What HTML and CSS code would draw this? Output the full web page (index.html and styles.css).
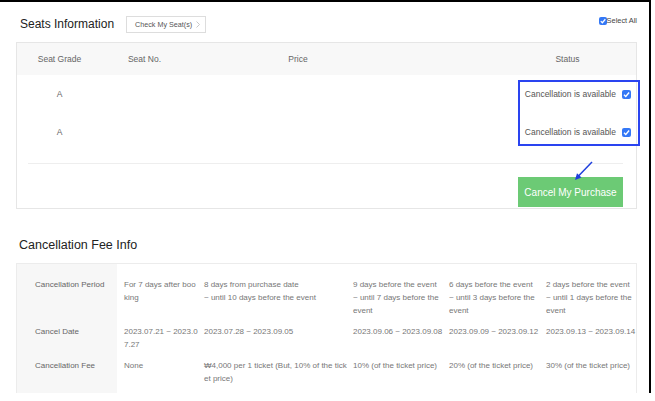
FILE: index.html
```html
<!DOCTYPE html>
<html lang="en">
<head>
<meta charset="utf-8">
<title>Seats Information</title>
<link rel="stylesheet" href="styles.css">
</head>
<body>
<div class="frame">
  <section class="seats">
    <div class="seats-head">
      <h2 class="title">Seats Information</h2>
      <button class="check-btn" type="button">Check My Seat(s)
        <svg class="chev" width="4" height="7" viewBox="0 0 4 7"><path d="M0.5 0.5 L3.5 3.5 L0.5 6.5" fill="none" stroke="#bbb" stroke-width="0.8"/></svg>
      </button>
      <label class="select-all"><span class="cb cb-sm"><svg viewBox="0 0 10 10"><path d="M2.2 5.2 L4.2 7.2 L7.9 2.8" fill="none" stroke="#fff" stroke-width="1.5"/></svg></span>Select All</label>
    </div>
    <div class="seat-box">
      <div class="seat-row seat-header">
        <div class="c c-grade">Seat Grade</div>
        <div class="c c-no">Seat No.</div>
        <div class="c c-price">Price</div>
        <div class="c c-gap"></div>
        <div class="c c-status">Status</div>
      </div>
      <div class="seat-row">
        <div class="c c-grade">A</div>
        <div class="c c-no"></div>
        <div class="c c-price"></div>
        <div class="c c-gap"></div>
        <div class="c c-status c-status-val">Cancellation is available<span class="cb"><svg viewBox="0 0 10 10"><path d="M2.2 5.2 L4.2 7.2 L7.9 2.8" fill="none" stroke="#fff" stroke-width="1.5"/></svg></span></div>
      </div>
      <div class="seat-row">
        <div class="c c-grade">A</div>
        <div class="c c-no"></div>
        <div class="c c-price"></div>
        <div class="c c-gap"></div>
        <div class="c c-status c-status-val">Cancellation is available<span class="cb"><svg viewBox="0 0 10 10"><path d="M2.2 5.2 L4.2 7.2 L7.9 2.8" fill="none" stroke="#fff" stroke-width="1.5"/></svg></span></div>
      </div>
      <div class="seat-foot">
        <button class="cancel-btn" type="button">Cancel My Purchase</button>
      </div>
      <div class="highlight"></div>
      <svg class="arrow" width="35" height="30" viewBox="0 0 35 30">
        <line x1="27" y1="7" x2="13.5" y2="21" stroke="#1f3fdd" stroke-width="1.5"/>
        <polygon points="10,25 16.5,22.6 12,18.3" fill="#1f3fdd"/>
      </svg>
    </div>
  </section>

  <section class="fee">
    <h2 class="title title-fee">Cancellation Fee Info</h2>
    <table class="fee-table">
      <colgroup>
        <col class="w-label">
        <col class="w-1">
        <col class="w-2">
        <col class="w-3">
        <col class="w-4">
        <col class="w-5">
      </colgroup>
      <tr class="r-first">
        <th>Cancellation Period</th>
        <td class="v1">For 7 days after booking</td>
        <td class="v2">8 days from purchase date<br>~ until 10 days before the event</td>
        <td>9 days before the event<br>~ until 7 days before the event</td>
        <td>6 days before the event<br>~ until 3 days before the event</td>
        <td class="v5">2 days before the event<br>~ until 1 days before the event</td>
      </tr>
      <tr>
        <th>Cancel Date</th>
        <td class="v1">2023.07.21 ~ 2023.07.27</td>
        <td class="v2">2023.07.28 ~ 2023.09.05</td>
        <td>2023.09.06 ~ 2023.09.08</td>
        <td>2023.09.09 ~ 2023.09.12</td>
        <td class="v5">2023.09.13 ~ 2023.09.14</td>
      </tr>
      <tr class="r-last">
        <th>Cancellation Fee</th>
        <td class="v1">None</td>
        <td class="v2">₩4,000 per 1 ticket (But, 10% of the ticket price)</td>
        <td>10% (of the ticket price)</td>
        <td>20% (of the ticket price)</td>
        <td class="v5">30% (of the ticket price)</td>
      </tr>
    </table>
  </section>
</div>
</body>
</html>
```
FILE: styles.css
```css
* { box-sizing: border-box; }
html, body { margin: 0; padding: 0; background: #fff; }
body {
  font-family: "Liberation Sans", Arial, "Noto Sans", sans-serif;
  color: #666;
}
.frame {
  width: 651px;
  height: 393px;
  border-top: 2px solid #000;
  border-right: 2px solid #000;
  padding-left: 16px;
}

/* ---------- Seats ---------- */
.seats-head {
  width: 621px;
  display: flex;
  align-items: center;
  padding-top: 14px;
  height: 31px;
}
.title {
  margin: 0 0 0 4px;
  font-size: 12px;
  line-height: 17px;
  font-weight: normal;
  color: #222;
}
.check-btn {
  margin-left: 12px;
  width: 80px;
  height: 17px;
  border: 1px solid #ddd;
  background: #fff;
  padding: 0 0 0 8px;
  display: flex;
  align-items: center;
  gap: 4px;
  font-family: inherit;
  font-size: 7.2px;
  color: #555;
  cursor: pointer;
}
.chev { display: block; }
.select-all {
  margin-left: auto;
  align-self: flex-start;
  margin-top: 1px;
  display: flex;
  align-items: center;
  font-size: 7.4px;
  line-height: 8px;
  color: #444;
}
.cb {
  display: inline-block;
  width: 9px;
  height: 9px;
  border-radius: 2px;
  background: #3478f6;
  flex: none;
}
.cb svg { display: block; width: 100%; height: 100%; }
.cb-sm { width: 8px; height: 8px; margin-right: 0; }

.seat-box {
  position: relative;
  margin-top: 9px;
  width: 621px;
  border: 1px solid #e6e6e6;
}
.seat-row {
  display: grid;
  grid-template-columns: 85px 85px 222px 90px 137px;
  height: 38px;
  align-items: center;
  font-size: 8.5px;
  color: #666;
}
.seat-header {
  height: 32px;
  background: #f8f8f8;
  color: #666;
}
.c { text-align: center; white-space: nowrap; }
.c-status-val {
  display: flex;
  align-items: center;
  justify-content: flex-end;
  gap: 6px;
  padding-right: 5px;
  color: #555;
}
.seat-foot {
  margin: 12px 13px 0 11px;
  border-top: 1px solid #eee;
  padding: 13px 0 1px;
  display: flex;
  justify-content: flex-end;
}
.cancel-btn {
  width: 105px;
  height: 30px;
  border: 0;
  background: #6cca75;
  color: #fff;
  font-family: inherit;
  font-size: 10px;
  padding: 0;
  cursor: pointer;
}
.highlight {
  position: absolute;
  left: 501px;
  top: 37px;
  width: 122px;
  height: 66px;
  border: 2px solid #2a44f0;
  pointer-events: none;
}
.arrow {
  position: absolute;
  left: 548px;
  top: 112px;
}

/* ---------- Fee ---------- */
.fee { padding-top: 28px; }
.title-fee {
  font-size: 12.5px;
  margin-left: 3px;
}
.fee-table {
  margin-top: 9px;
  width: 621px;
  table-layout: fixed;
  border-collapse: separate;
  border-spacing: 0;
  border: 1px solid #ececec;
  font-size: 8px;
  line-height: 13px;
}
.w-label { width: 100px; }
.w-1 { width: 87px; }
.w-2 { width: 149px; }
.w-3 { width: 96px; }
.w-4 { width: 97px; }
.w-5 { width: 90px; }
.fee-table th,
.fee-table td {
  vertical-align: top;
  text-align: left;
  font-weight: normal;
  padding: 4px 6px 4px 0;
  word-break: break-all;
}
.fee-table th {
  background: #f7f7f7;
  padding-left: 18px;
  color: #666;
  word-break: normal;
}
.fee-table td { color: #777; }
.fee-table td.v1 { padding-left: 7px; padding-right: 5px; }
.fee-table td.v2 { padding-right: 2px; }
.fee-table td.v5 { padding-right: 0; }
.fee-table tr.r-first th,
.fee-table tr.r-first td { padding-top: 14px; }
.fee-table tr.r-last th,
.fee-table tr.r-last td { padding-bottom: 10px; }
```
